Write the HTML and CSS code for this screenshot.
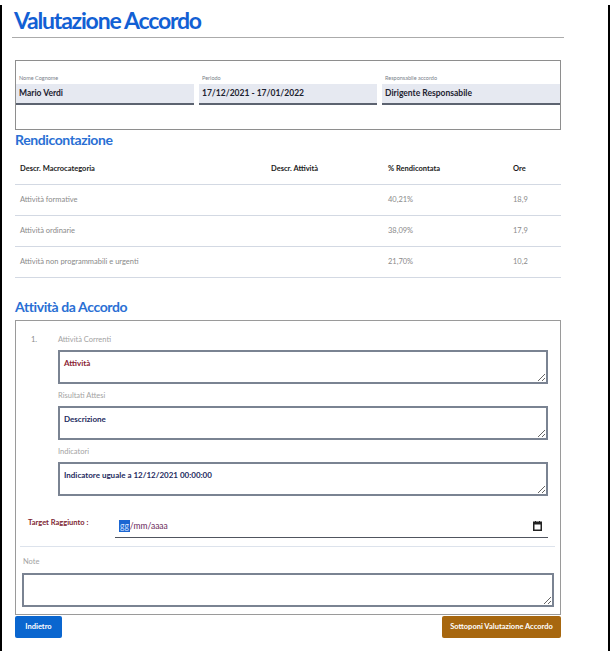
FILE: index.html
```html
<!DOCTYPE html>
<html lang="it">
<head>
<meta charset="utf-8">
<title>Valutazione Accordo</title>
<link rel="stylesheet" href="styles.css">
</head>
<body>
<div class="frame">
  <div class="page">
    <h1 class="title">Valutazione Accordo</h1>
    <div class="rule"></div>

    <div class="info">
      <div class="field"><div class="lbl">Nome Cognome</div><div class="val">Mario Verdi</div></div>
      <div class="field"><div class="lbl">Periodo</div><div class="val">17/12/2021 - 17/01/2022</div></div>
      <div class="field"><div class="lbl">Responsabile accordo</div><div class="val">Dirigente Responsabile</div></div>
    </div>

    <h2 class="sec">Rendicontazione</h2>
    <table class="tbl">
      <thead>
        <tr><th class="c1">Descr. Macrocategoria</th><th class="c2">Descr. Attività</th><th class="c3">% Rendicontata</th><th class="c4">Ore</th></tr>
      </thead>
      <tbody>
        <tr><td>Attività formative</td><td></td><td>40,21%</td><td>18,9</td></tr>
        <tr><td>Attività ordinarie</td><td></td><td>38,09%</td><td>17,9</td></tr>
        <tr><td>Attività non programmabili e urgenti</td><td></td><td>21,70%</td><td>10,2</td></tr>
      </tbody>
    </table>

    <h2 class="sec sec2">Attività da Accordo</h2>
    <div class="box">
      <div class="item">
        <span class="num">1.</span>
        <div class="groups">
          <div class="flabel">Attività Correnti</div>
          <textarea class="ta red" readonly>Attività</textarea>
          <div class="flabel">Risultati Attesi</div>
          <textarea class="ta navy" readonly>Descrizione</textarea>
          <div class="flabel">Indicatori</div>
          <textarea class="ta navy" readonly>Indicatore uguale a 12/12/2021 00:00:00</textarea>
        </div>
      </div>
      <div class="target">
        <span class="tlabel">Target Raggiunto :</span>
        <div class="date">
          <span class="seg">gg</span><span class="dtext">/mm/aaaa</span>
          <svg class="cal" width="9" height="10" viewBox="0 0 9 10"><rect x="0.75" y="1.25" width="7.5" height="8" fill="none" stroke="#222" stroke-width="1.5"/><rect x="0.5" y="1" width="8" height="2.5" fill="#222"/><rect x="2" y="0" width="1" height="2" fill="#222"/><rect x="6" y="0" width="1" height="2" fill="#222"/></svg>
        </div>
      </div>
      <div class="sep"></div>
      <div class="nlabel">Note</div>
      <textarea class="ta note" readonly></textarea>
    </div>

    <div class="actions">
      <button class="btn back">Indietro</button>
      <button class="btn submit">Sottoponi Valutazione Accordo</button>
    </div>
  </div>
</div>
</body>
</html>
```

FILE: styles.css
```css
html, body {
  margin: 0;
  padding: 0;
  background: #fff;
}
body {
  font-family: Lato, "Noto Sans", sans-serif;
}
.frame {
  box-sizing: border-box;
  width: 610px;
  height: 650px;
  border-left: 2px solid #000;
  border-right: 2px solid #000;
  border-bottom: 2px solid #000;
}
.page {
  padding-left: 10px;
  width: 552px;
}
.title {
  margin: 5px 0 0 0;
  padding-left: 2px;
  font: 700 23px/30px Lato, sans-serif;
  letter-spacing: -1.2px;
  color: #1260d4;
}
.rule {
  margin-top: 2px;
  height: 1px;
  background: #ababab;
}
.info {
  margin: 22px 0 0 3px;
  width: 546px;
  box-sizing: border-box;
  height: 70px;
  border: 1px solid #8e8e8e;
  padding: 13px 0 0 0;
  display: grid;
  grid-template-columns: 178px 178px 178px;
  column-gap: 5px;
  align-content: start;
}
.lbl {
  font: 400 5.5px/8px Lato, sans-serif;
  color: #7a7f8a;
  padding-left: 3px;
  margin-bottom: 2px;
}
.val {
  height: 19px;
  line-height: 19px;
  background: #e6e9f1;
  border-bottom: 2px solid #5c6370;
  padding-left: 3px;
  font: 700 8.5px/19px Lato, sans-serif;
  color: #1d2330;
}
.sec {
  margin: 1px 0 0 3px;
  font: 700 14px/18px Lato, sans-serif;
  letter-spacing: -0.4px;
  color: #2a6fd4;
}
.sec2 {
  margin-top: 20px;
}
.tbl {
  margin-left: 3px;
  width: 546px;
  border-collapse: collapse;
  table-layout: fixed;
}
.tbl th {
  text-align: left;
  font: 700 7.5px/12px Lato, sans-serif;
  color: #1b1b1b;
  padding: 14px 0 9px 0;
  border-bottom: 1px solid #d3d9e3;
}
.tbl th.c1 { width: 251px; padding-left: 5px; }
.tbl th.c2 { width: 117px; }
.tbl th.c3 { width: 125px; }
.tbl td {
  height: 30px;
  padding: 0;
  font: 400 7.5px/12px Lato, sans-serif;
  color: #8a8a8a;
  border-bottom: 1px solid #d3d9e3;
}
.tbl td:first-child { padding-left: 5px; }
.box {
  margin: 4px 0 0 3px;
  width: 546px;
  box-sizing: border-box;
  border: 1px solid #9a9a9a;
  padding: 13px 0 7px 0;
}
.item {
  display: flex;
  padding-left: 15px;
  padding-right: 12px;
}
.num {
  width: 27px;
  flex: none;
  font: 400 7.5px/12px Lato, sans-serif;
  color: #8a8a8a;
}
.groups {
  flex: 1;
  display: flex;
  flex-direction: column;
}
.flabel {
  font: 400 7.5px/12px Lato, sans-serif;
  color: #a3a3a3;
  margin-bottom: 4px;
}
.ta {
  display: block;
  box-sizing: border-box;
  height: 34px;
  width: 100%;
  margin: 0 0 6px 0;
  padding: 6px 4px;
  border: 2px solid #7a8392;
  border-radius: 0;
  background: #fff;
  font: 700 8px/11px Lato, sans-serif;
  outline: none;
}
.red { color: #8a1d34; }
.navy { color: #1d2a5e; }
.target {
  display: flex;
  align-items: flex-start;
  margin-top: 12px;
  padding-left: 12px;
  padding-right: 12px;
}
.tlabel {
  width: 87px;
  flex: none;
  padding-top: 3px;
  font: 700 7.5px/12px Lato, sans-serif;
  color: #7e1f33;
}
.date {
  flex: 1;
  height: 24px;
  box-sizing: border-box;
  border-bottom: 1px solid #50555f;
  display: flex;
  align-items: center;
  padding: 1px 6px 0 4px;
}
.seg {
  display: inline-block;
  background: #1b66d2;
  color: #cfe0ff;
  font: 400 8.5px/12px Lato, sans-serif;
  padding: 0 1px;
}
.dtext {
  font: 400 8.5px/12px Lato, sans-serif;
  color: #6b2a5c;
  flex: 1;
}
.cal {
  display: block;
}
.sep {
  margin: 8px 5px 0 4px;
  height: 1px;
  background: #dde3ec;
}
.nlabel {
  margin: 9px 0 5px 7px;
  font: 400 7.5px/12px Lato, sans-serif;
  color: #a3a3a3;
}
.note {
  margin: 0 0 0 6px;
  width: 532px;
}
.actions {
  display: flex;
  justify-content: space-between;
  margin: 1px 0 0 3px;
  width: 546px;
}
.btn {
  height: 22px;
  border: none;
  border-radius: 2px;
  color: #fff;
  font: 700 7.5px/22px Lato, sans-serif;
  padding: 0;
  cursor: pointer;
}
.back {
  width: 47px;
  background: #0a66cf;
}
.submit {
  width: 119px;
  background: #a7670f;
}
```
